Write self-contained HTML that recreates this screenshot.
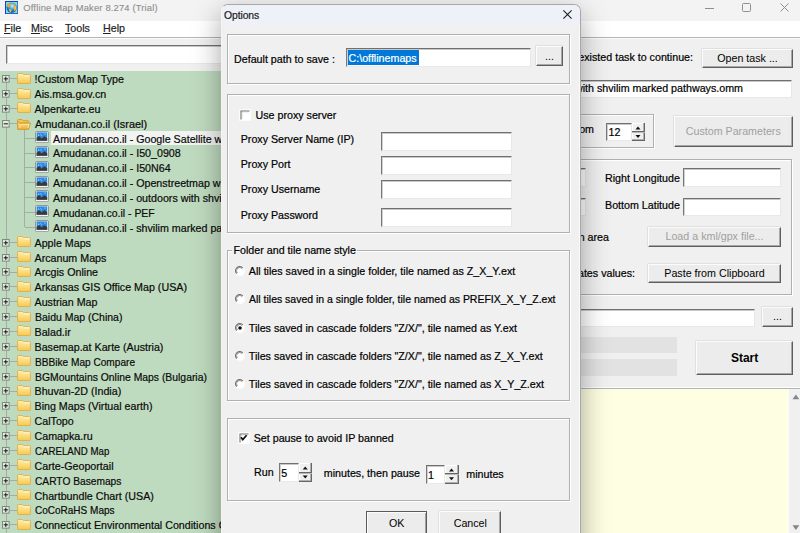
<!DOCTYPE html>
<html><head><meta charset="utf-8"><style>
*{box-sizing:border-box}
html,body{margin:0;padding:0}
body{width:800px;height:533px;overflow:hidden;position:relative;background:#f0f0f0;font-family:"Liberation Sans",sans-serif;font-size:10.7px;color:#000}
.t,.tt{position:absolute;white-space:nowrap;line-height:14px;-webkit-text-stroke:0.2px currentColor}
.tt{line-height:14.87px;color:#0a0a0a}
.tb{position:absolute;background:#fff;border-top:1px solid #707070;border-left:1px solid #787878;border-right:1px solid #e8e8e8;border-bottom:1px solid #e8e8e8;box-shadow:inset 0 1px 0 #c8c8c8, inset 1px 0 0 #d0d0d0}
.btn{position:absolute;background:#ececec;border-top:1px solid #fcfcfc;border-left:1px solid #fcfcfc;border-right:1px solid #5e5e5e;border-bottom:1px solid #5e5e5e;text-align:center;white-space:nowrap;box-shadow:inset -1px -1px 0 #a8a8a8, -0.5px -0.5px 0 #d0d0d0}
.grp{position:absolute;border:1px solid #b0b0b0;box-shadow:1px 1px 0 #fff, inset 1px 1px 0 #fff}
.u{text-decoration:underline}
</style></head><body>
<!-- MAIN WINDOW -->
<div style="position:absolute;left:0;top:0;width:800px;height:20.8px;background:#f3f3f3"></div>
<svg style="position:absolute;left:4.8px;top:0.9px" width="13.4" height="13.2" viewBox="0 0 13.4 13.2"><defs><radialGradient id="gl" cx="0.55" cy="0.35" r="0.65"><stop offset="0" stop-color="#c8f2ff"/><stop offset="0.5" stop-color="#3a9ad8"/><stop offset="1" stop-color="#0a4fa8"/></radialGradient></defs><rect x="0.5" y="0.5" width="12.4" height="12.2" fill="#6fe6c6" stroke="#1a3ae8" stroke-width="1"/><circle cx="6.7" cy="6.6" r="5.2" fill="url(#gl)"/><path d="M2 5.5 Q2.5 2.5 5.3 2.3 L5.8 3.8 L4.2 5.8 L3.2 6.8 Z" fill="#f5a030"/><path d="M5.8 1.6 Q6.8 1.3 7.6 1.8 L6.8 2.7 Z" fill="#f8b840"/><path d="M8.6 3 Q11.4 4 11.6 7 Q11.2 9.8 9.4 10.6 L9 8 L8.2 6.8 L8.8 5.2 Z" fill="#f3b030"/><path d="M9 6.5 L10.8 6.4 L10.6 8 Z" fill="#ffe040"/><path d="M3.8 8 L6.2 8.4 L6.6 9.8 L5.2 11.5 L4.5 10.2 Z" fill="#f8c030"/></svg>
<div class="t" style="left:23.3px;top:0.6px;font-size:9.4px;color:#8e8e8e;letter-spacing:0.17px;-webkit-text-stroke:0.15px #999">Offline Map Maker 8.274 (Trial)</div>
<div style="position:absolute;left:705px;top:7.5px;width:8.5px;height:1px;background:#8f8f8f"></div>
<div style="position:absolute;left:742px;top:3px;width:8.5px;height:8.5px;border:1px solid #8f8f8f;border-radius:1.5px"></div>
<svg style="position:absolute;left:780px;top:3px" width="9" height="9" viewBox="0 0 9 9"><path d="M0.5 0.5 L8.5 8.5 M8.5 0.5 L0.5 8.5" stroke="#8f8f8f" stroke-width="1"/></svg>
<div style="position:absolute;left:0;top:20.8px;width:800px;height:16.2px;background:#fff"></div>
<div class="t" style="left:4px;top:20.7px;color:#222"><span class="u">F</span>ile</div>
<div class="t" style="left:31px;top:20.7px;color:#222"><span class="u">M</span>isc</div>
<div class="t" style="left:65px;top:20.7px;color:#222"><span class="u">T</span>ools</div>
<div class="t" style="left:103px;top:20.7px;color:#222"><span class="u">H</span>elp</div>
<div style="position:absolute;left:0;top:36.9px;width:800px;height:1.2px;background:#b4b4b4"></div>
<div style="position:absolute;left:0;top:38px;width:800px;height:1px;background:#fdfdfd"></div>
<div class="tb" style="left:6px;top:45px;width:234px;height:19px;"></div>
<div style="position:absolute;left:0;top:70.9px;width:222px;height:463px;background:#bfdbbf"></div>
<div style="position:absolute;left:6px;top:78.7px;width:1px;height:454.3px;background:#a3ada3"></div>
<div style="position:absolute;left:24px;top:128.3px;width:1px;height:99.1px;background:#a3ada3"></div>
<div style="position:absolute;left:10px;top:78.2px;width:7px;height:1px;background:#a3ada3"></div>
<svg style="position:absolute;left:2.25px;top:75.05px" width="9.3" height="9.3" viewBox="0 0 9.3 9.3"><rect x="0.5" y="0.5" width="6.65" height="6.65" fill="#e2ebe2" stroke="#7f897f" stroke-width="1"/><path d="M1.7 3.825 H5.95" stroke="#111" stroke-width="1"/><path d="M3.825 1.7 V5.95" stroke="#111" stroke-width="1"/></svg>
<div style="position:absolute;left:17px;top:72.6px;width:14px;height:11px"><svg width="14" height="11" viewBox="0 0 14 11"><defs><linearGradient id="fg" x1="0" y1="0" x2="0" y2="1"><stop offset="0" stop-color="#fff0b0"/><stop offset="1" stop-color="#f7c94e"/></linearGradient></defs><path d="M0.6 1.2 Q0.6 0.5 1.3 0.5 H5.6 L6.8 1.7 H12.7 Q13.4 1.7 13.4 2.4 V10 Q13.4 10.5 12.7 10.5 H1.3 Q0.6 10.5 0.6 10 Z" fill="url(#fg)" stroke="#e2ad45" stroke-width="0.9"/><path d="M6.6 2.9 H12.8" stroke="#fffbe8" stroke-width="0.9"/></svg></div>
<div class="tt" style="left:34.5px;top:72.1px;">!Custom Map Type</div>
<div style="position:absolute;left:10px;top:93.1px;width:7px;height:1px;background:#a3ada3"></div>
<svg style="position:absolute;left:2.25px;top:89.92px" width="9.3" height="9.3" viewBox="0 0 9.3 9.3"><rect x="0.5" y="0.5" width="6.65" height="6.65" fill="#e2ebe2" stroke="#7f897f" stroke-width="1"/><path d="M1.7 3.825 H5.95" stroke="#111" stroke-width="1"/><path d="M3.825 1.7 V5.95" stroke="#111" stroke-width="1"/></svg>
<div style="position:absolute;left:17px;top:87.5px;width:14px;height:11px"><svg width="14" height="11" viewBox="0 0 14 11"><defs><linearGradient id="fg" x1="0" y1="0" x2="0" y2="1"><stop offset="0" stop-color="#fff0b0"/><stop offset="1" stop-color="#f7c94e"/></linearGradient></defs><path d="M0.6 1.2 Q0.6 0.5 1.3 0.5 H5.6 L6.8 1.7 H12.7 Q13.4 1.7 13.4 2.4 V10 Q13.4 10.5 12.7 10.5 H1.3 Q0.6 10.5 0.6 10 Z" fill="url(#fg)" stroke="#e2ad45" stroke-width="0.9"/><path d="M6.6 2.9 H12.8" stroke="#fffbe8" stroke-width="0.9"/></svg></div>
<div class="tt" style="left:34.5px;top:86.9px;">Ais.msa.gov.cn</div>
<div style="position:absolute;left:10px;top:107.9px;width:7px;height:1px;background:#a3ada3"></div>
<svg style="position:absolute;left:2.25px;top:104.80px" width="9.3" height="9.3" viewBox="0 0 9.3 9.3"><rect x="0.5" y="0.5" width="6.65" height="6.65" fill="#e2ebe2" stroke="#7f897f" stroke-width="1"/><path d="M1.7 3.825 H5.95" stroke="#111" stroke-width="1"/><path d="M3.825 1.7 V5.95" stroke="#111" stroke-width="1"/></svg>
<div style="position:absolute;left:17px;top:102.3px;width:14px;height:11px"><svg width="14" height="11" viewBox="0 0 14 11"><defs><linearGradient id="fg" x1="0" y1="0" x2="0" y2="1"><stop offset="0" stop-color="#fff0b0"/><stop offset="1" stop-color="#f7c94e"/></linearGradient></defs><path d="M0.6 1.2 Q0.6 0.5 1.3 0.5 H5.6 L6.8 1.7 H12.7 Q13.4 1.7 13.4 2.4 V10 Q13.4 10.5 12.7 10.5 H1.3 Q0.6 10.5 0.6 10 Z" fill="url(#fg)" stroke="#e2ad45" stroke-width="0.9"/><path d="M6.6 2.9 H12.8" stroke="#fffbe8" stroke-width="0.9"/></svg></div>
<div class="tt" style="left:34.5px;top:101.8px;">Alpenkarte.eu</div>
<div style="position:absolute;left:10px;top:122.8px;width:7px;height:1px;background:#a3ada3"></div>
<svg style="position:absolute;left:2.25px;top:119.67px" width="9.3" height="9.3" viewBox="0 0 9.3 9.3"><rect x="0.5" y="0.5" width="6.65" height="6.65" fill="#e2ebe2" stroke="#7f897f" stroke-width="1"/><path d="M1.7 3.825 H5.95" stroke="#111" stroke-width="1"/></svg>
<div style="position:absolute;left:17px;top:118.5px;width:14px;height:11px"><svg width="14" height="11" viewBox="0 0 14 11"><defs><linearGradient id="og" x1="0" y1="0" x2="0" y2="1"><stop offset="0" stop-color="#fde48c"/><stop offset="1" stop-color="#eeb237"/></linearGradient></defs><path d="M0.6 1.2 Q0.6 0.5 1.3 0.5 H5 L6.2 1.7 H11 Q11.7 1.7 11.7 2.4 V4 H0.6 Z" fill="#f5c550" stroke="#d89a2c" stroke-width="0.9"/><path d="M0.6 10.4 V2 L2.6 4.2 H13.5 L11.5 10.4 Z" fill="url(#og)" stroke="#d4962a" stroke-width="0.9"/><path d="M2.6 9 L3.8 5.4 H12 L11 9" stroke="#fff3c4" stroke-width="0.7" fill="none"/></svg></div>
<div class="tt" style="left:34.5px;top:116.7px;transform:scaleX(1.0203);transform-origin:0 0;">Amudanan.co.il (Israel)</div>
<div style="position:absolute;left:25px;top:137.7px;width:10px;height:1px;background:#a3ada3"></div>
<div style="position:absolute;left:35px;top:130.9px;width:14px;height:12px"><svg width="14" height="12" viewBox="0 0 14 12"><rect x="0.5" y="0.5" width="13" height="11.2" rx="1.2" fill="#f4f4f4" stroke="#8c8c8c" stroke-width="0.9"/><rect x="1.6" y="1.4" width="10.6" height="8.4" fill="#2b8ae6"/><path d="M3 4.2 h1.2 M5.6 3.6 l1 0.8 M9.5 3 h1" stroke="#e8f6ff" stroke-width="0.9"/><path d="M1.6 9.8 V7 L4 5 L6.6 7.6 L9.3 5.2 L12.2 7.2 V9.8 Z" fill="#3c3833"/></svg></div>
<div style="position:absolute;left:51px;top:131.3px;width:175px;height:13.9px;background:#f2f4f2"></div>
<div class="tt" style="left:53px;top:131.6px;">Amudanan.co.il - Google Satellite with shvilim</div>
<div style="position:absolute;left:25px;top:152.6px;width:10px;height:1px;background:#a3ada3"></div>
<div style="position:absolute;left:35px;top:145.8px;width:14px;height:12px"><svg width="14" height="12" viewBox="0 0 14 12"><rect x="0.5" y="0.5" width="13" height="11.2" rx="1.2" fill="#f4f4f4" stroke="#8c8c8c" stroke-width="0.9"/><rect x="1.6" y="1.4" width="10.6" height="8.4" fill="#2b8ae6"/><path d="M3 4.2 h1.2 M5.6 3.6 l1 0.8 M9.5 3 h1" stroke="#e8f6ff" stroke-width="0.9"/><path d="M1.6 9.8 V7 L4 5 L6.6 7.6 L9.3 5.2 L12.2 7.2 V9.8 Z" fill="#3c3833"/></svg></div>
<div class="tt" style="left:53px;top:146.4px;">Amudanan.co.il - I50_0908</div>
<div style="position:absolute;left:25px;top:167.4px;width:10px;height:1px;background:#a3ada3"></div>
<div style="position:absolute;left:35px;top:160.6px;width:14px;height:12px"><svg width="14" height="12" viewBox="0 0 14 12"><rect x="0.5" y="0.5" width="13" height="11.2" rx="1.2" fill="#f4f4f4" stroke="#8c8c8c" stroke-width="0.9"/><rect x="1.6" y="1.4" width="10.6" height="8.4" fill="#2b8ae6"/><path d="M3 4.2 h1.2 M5.6 3.6 l1 0.8 M9.5 3 h1" stroke="#e8f6ff" stroke-width="0.9"/><path d="M1.6 9.8 V7 L4 5 L6.6 7.6 L9.3 5.2 L12.2 7.2 V9.8 Z" fill="#3c3833"/></svg></div>
<div class="tt" style="left:53px;top:161.3px;">Amudanan.co.il - I50N64</div>
<div style="position:absolute;left:25px;top:182.3px;width:10px;height:1px;background:#a3ada3"></div>
<div style="position:absolute;left:35px;top:175.5px;width:14px;height:12px"><svg width="14" height="12" viewBox="0 0 14 12"><rect x="0.5" y="0.5" width="13" height="11.2" rx="1.2" fill="#f4f4f4" stroke="#8c8c8c" stroke-width="0.9"/><rect x="1.6" y="1.4" width="10.6" height="8.4" fill="#2b8ae6"/><path d="M3 4.2 h1.2 M5.6 3.6 l1 0.8 M9.5 3 h1" stroke="#e8f6ff" stroke-width="0.9"/><path d="M1.6 9.8 V7 L4 5 L6.6 7.6 L9.3 5.2 L12.2 7.2 V9.8 Z" fill="#3c3833"/></svg></div>
<div class="tt" style="left:53px;top:176.2px;">Amudanan.co.il - Openstreetmap with shvilim</div>
<div style="position:absolute;left:25px;top:197.2px;width:10px;height:1px;background:#a3ada3"></div>
<div style="position:absolute;left:35px;top:190.4px;width:14px;height:12px"><svg width="14" height="12" viewBox="0 0 14 12"><rect x="0.5" y="0.5" width="13" height="11.2" rx="1.2" fill="#f4f4f4" stroke="#8c8c8c" stroke-width="0.9"/><rect x="1.6" y="1.4" width="10.6" height="8.4" fill="#2b8ae6"/><path d="M3 4.2 h1.2 M5.6 3.6 l1 0.8 M9.5 3 h1" stroke="#e8f6ff" stroke-width="0.9"/><path d="M1.6 9.8 V7 L4 5 L6.6 7.6 L9.3 5.2 L12.2 7.2 V9.8 Z" fill="#3c3833"/></svg></div>
<div class="tt" style="left:53px;top:191.0px;">Amudanan.co.il - outdoors with shvilim</div>
<div style="position:absolute;left:25px;top:212.1px;width:10px;height:1px;background:#a3ada3"></div>
<div style="position:absolute;left:35px;top:205.3px;width:14px;height:12px"><svg width="14" height="12" viewBox="0 0 14 12"><rect x="0.5" y="0.5" width="13" height="11.2" rx="1.2" fill="#f4f4f4" stroke="#8c8c8c" stroke-width="0.9"/><rect x="1.6" y="1.4" width="10.6" height="8.4" fill="#2b8ae6"/><path d="M3 4.2 h1.2 M5.6 3.6 l1 0.8 M9.5 3 h1" stroke="#e8f6ff" stroke-width="0.9"/><path d="M1.6 9.8 V7 L4 5 L6.6 7.6 L9.3 5.2 L12.2 7.2 V9.8 Z" fill="#3c3833"/></svg></div>
<div class="tt" style="left:53px;top:205.9px;transform:scaleX(0.9786);transform-origin:0 0;">Amudanan.co.il - PEF</div>
<div style="position:absolute;left:25px;top:226.9px;width:10px;height:1px;background:#a3ada3"></div>
<div style="position:absolute;left:35px;top:220.1px;width:14px;height:12px"><svg width="14" height="12" viewBox="0 0 14 12"><rect x="0.5" y="0.5" width="13" height="11.2" rx="1.2" fill="#f4f4f4" stroke="#8c8c8c" stroke-width="0.9"/><rect x="1.6" y="1.4" width="10.6" height="8.4" fill="#2b8ae6"/><path d="M3 4.2 h1.2 M5.6 3.6 l1 0.8 M9.5 3 h1" stroke="#e8f6ff" stroke-width="0.9"/><path d="M1.6 9.8 V7 L4 5 L6.6 7.6 L9.3 5.2 L12.2 7.2 V9.8 Z" fill="#3c3833"/></svg></div>
<div class="tt" style="left:53px;top:220.8px;">Amudanan.co.il - shvilim marked pathways</div>
<div style="position:absolute;left:10px;top:241.8px;width:7px;height:1px;background:#a3ada3"></div>
<svg style="position:absolute;left:2.25px;top:238.65px" width="9.3" height="9.3" viewBox="0 0 9.3 9.3"><rect x="0.5" y="0.5" width="6.65" height="6.65" fill="#e2ebe2" stroke="#7f897f" stroke-width="1"/><path d="M1.7 3.825 H5.95" stroke="#111" stroke-width="1"/><path d="M3.825 1.7 V5.95" stroke="#111" stroke-width="1"/></svg>
<div style="position:absolute;left:17px;top:236.2px;width:14px;height:11px"><svg width="14" height="11" viewBox="0 0 14 11"><defs><linearGradient id="fg" x1="0" y1="0" x2="0" y2="1"><stop offset="0" stop-color="#fff0b0"/><stop offset="1" stop-color="#f7c94e"/></linearGradient></defs><path d="M0.6 1.2 Q0.6 0.5 1.3 0.5 H5.6 L6.8 1.7 H12.7 Q13.4 1.7 13.4 2.4 V10 Q13.4 10.5 12.7 10.5 H1.3 Q0.6 10.5 0.6 10 Z" fill="url(#fg)" stroke="#e2ad45" stroke-width="0.9"/><path d="M6.6 2.9 H12.8" stroke="#fffbe8" stroke-width="0.9"/></svg></div>
<div class="tt" style="left:34.5px;top:235.7px;">Apple Maps</div>
<div style="position:absolute;left:10px;top:256.7px;width:7px;height:1px;background:#a3ada3"></div>
<svg style="position:absolute;left:2.25px;top:253.53px" width="9.3" height="9.3" viewBox="0 0 9.3 9.3"><rect x="0.5" y="0.5" width="6.65" height="6.65" fill="#e2ebe2" stroke="#7f897f" stroke-width="1"/><path d="M1.7 3.825 H5.95" stroke="#111" stroke-width="1"/><path d="M3.825 1.7 V5.95" stroke="#111" stroke-width="1"/></svg>
<div style="position:absolute;left:17px;top:251.1px;width:14px;height:11px"><svg width="14" height="11" viewBox="0 0 14 11"><defs><linearGradient id="fg" x1="0" y1="0" x2="0" y2="1"><stop offset="0" stop-color="#fff0b0"/><stop offset="1" stop-color="#f7c94e"/></linearGradient></defs><path d="M0.6 1.2 Q0.6 0.5 1.3 0.5 H5.6 L6.8 1.7 H12.7 Q13.4 1.7 13.4 2.4 V10 Q13.4 10.5 12.7 10.5 H1.3 Q0.6 10.5 0.6 10 Z" fill="url(#fg)" stroke="#e2ad45" stroke-width="0.9"/><path d="M6.6 2.9 H12.8" stroke="#fffbe8" stroke-width="0.9"/></svg></div>
<div class="tt" style="left:34.5px;top:250.5px;">Arcanum Maps</div>
<div style="position:absolute;left:10px;top:271.5px;width:7px;height:1px;background:#a3ada3"></div>
<svg style="position:absolute;left:2.25px;top:268.40px" width="9.3" height="9.3" viewBox="0 0 9.3 9.3"><rect x="0.5" y="0.5" width="6.65" height="6.65" fill="#e2ebe2" stroke="#7f897f" stroke-width="1"/><path d="M1.7 3.825 H5.95" stroke="#111" stroke-width="1"/><path d="M3.825 1.7 V5.95" stroke="#111" stroke-width="1"/></svg>
<div style="position:absolute;left:17px;top:265.9px;width:14px;height:11px"><svg width="14" height="11" viewBox="0 0 14 11"><defs><linearGradient id="fg" x1="0" y1="0" x2="0" y2="1"><stop offset="0" stop-color="#fff0b0"/><stop offset="1" stop-color="#f7c94e"/></linearGradient></defs><path d="M0.6 1.2 Q0.6 0.5 1.3 0.5 H5.6 L6.8 1.7 H12.7 Q13.4 1.7 13.4 2.4 V10 Q13.4 10.5 12.7 10.5 H1.3 Q0.6 10.5 0.6 10 Z" fill="url(#fg)" stroke="#e2ad45" stroke-width="0.9"/><path d="M6.6 2.9 H12.8" stroke="#fffbe8" stroke-width="0.9"/></svg></div>
<div class="tt" style="left:34.5px;top:265.4px;">Arcgis Online</div>
<div style="position:absolute;left:10px;top:286.4px;width:7px;height:1px;background:#a3ada3"></div>
<svg style="position:absolute;left:2.25px;top:283.27px" width="9.3" height="9.3" viewBox="0 0 9.3 9.3"><rect x="0.5" y="0.5" width="6.65" height="6.65" fill="#e2ebe2" stroke="#7f897f" stroke-width="1"/><path d="M1.7 3.825 H5.95" stroke="#111" stroke-width="1"/><path d="M3.825 1.7 V5.95" stroke="#111" stroke-width="1"/></svg>
<div style="position:absolute;left:17px;top:280.8px;width:14px;height:11px"><svg width="14" height="11" viewBox="0 0 14 11"><defs><linearGradient id="fg" x1="0" y1="0" x2="0" y2="1"><stop offset="0" stop-color="#fff0b0"/><stop offset="1" stop-color="#f7c94e"/></linearGradient></defs><path d="M0.6 1.2 Q0.6 0.5 1.3 0.5 H5.6 L6.8 1.7 H12.7 Q13.4 1.7 13.4 2.4 V10 Q13.4 10.5 12.7 10.5 H1.3 Q0.6 10.5 0.6 10 Z" fill="url(#fg)" stroke="#e2ad45" stroke-width="0.9"/><path d="M6.6 2.9 H12.8" stroke="#fffbe8" stroke-width="0.9"/></svg></div>
<div class="tt" style="left:34.5px;top:280.3px;">Arkansas GIS Office Map (USA)</div>
<div style="position:absolute;left:10px;top:301.3px;width:7px;height:1px;background:#a3ada3"></div>
<svg style="position:absolute;left:2.25px;top:298.15px" width="9.3" height="9.3" viewBox="0 0 9.3 9.3"><rect x="0.5" y="0.5" width="6.65" height="6.65" fill="#e2ebe2" stroke="#7f897f" stroke-width="1"/><path d="M1.7 3.825 H5.95" stroke="#111" stroke-width="1"/><path d="M3.825 1.7 V5.95" stroke="#111" stroke-width="1"/></svg>
<div style="position:absolute;left:17px;top:295.7px;width:14px;height:11px"><svg width="14" height="11" viewBox="0 0 14 11"><defs><linearGradient id="fg" x1="0" y1="0" x2="0" y2="1"><stop offset="0" stop-color="#fff0b0"/><stop offset="1" stop-color="#f7c94e"/></linearGradient></defs><path d="M0.6 1.2 Q0.6 0.5 1.3 0.5 H5.6 L6.8 1.7 H12.7 Q13.4 1.7 13.4 2.4 V10 Q13.4 10.5 12.7 10.5 H1.3 Q0.6 10.5 0.6 10 Z" fill="url(#fg)" stroke="#e2ad45" stroke-width="0.9"/><path d="M6.6 2.9 H12.8" stroke="#fffbe8" stroke-width="0.9"/></svg></div>
<div class="tt" style="left:34.5px;top:295.2px;">Austrian Map</div>
<div style="position:absolute;left:10px;top:316.2px;width:7px;height:1px;background:#a3ada3"></div>
<svg style="position:absolute;left:2.25px;top:313.02px" width="9.3" height="9.3" viewBox="0 0 9.3 9.3"><rect x="0.5" y="0.5" width="6.65" height="6.65" fill="#e2ebe2" stroke="#7f897f" stroke-width="1"/><path d="M1.7 3.825 H5.95" stroke="#111" stroke-width="1"/><path d="M3.825 1.7 V5.95" stroke="#111" stroke-width="1"/></svg>
<div style="position:absolute;left:17px;top:310.6px;width:14px;height:11px"><svg width="14" height="11" viewBox="0 0 14 11"><defs><linearGradient id="fg" x1="0" y1="0" x2="0" y2="1"><stop offset="0" stop-color="#fff0b0"/><stop offset="1" stop-color="#f7c94e"/></linearGradient></defs><path d="M0.6 1.2 Q0.6 0.5 1.3 0.5 H5.6 L6.8 1.7 H12.7 Q13.4 1.7 13.4 2.4 V10 Q13.4 10.5 12.7 10.5 H1.3 Q0.6 10.5 0.6 10 Z" fill="url(#fg)" stroke="#e2ad45" stroke-width="0.9"/><path d="M6.6 2.9 H12.8" stroke="#fffbe8" stroke-width="0.9"/></svg></div>
<div class="tt" style="left:34.5px;top:310.0px;transform:scaleX(0.9808);transform-origin:0 0;">Baidu Map (China)</div>
<div style="position:absolute;left:10px;top:331.0px;width:7px;height:1px;background:#a3ada3"></div>
<svg style="position:absolute;left:2.25px;top:327.89px" width="9.3" height="9.3" viewBox="0 0 9.3 9.3"><rect x="0.5" y="0.5" width="6.65" height="6.65" fill="#e2ebe2" stroke="#7f897f" stroke-width="1"/><path d="M1.7 3.825 H5.95" stroke="#111" stroke-width="1"/><path d="M3.825 1.7 V5.95" stroke="#111" stroke-width="1"/></svg>
<div style="position:absolute;left:17px;top:325.4px;width:14px;height:11px"><svg width="14" height="11" viewBox="0 0 14 11"><defs><linearGradient id="fg" x1="0" y1="0" x2="0" y2="1"><stop offset="0" stop-color="#fff0b0"/><stop offset="1" stop-color="#f7c94e"/></linearGradient></defs><path d="M0.6 1.2 Q0.6 0.5 1.3 0.5 H5.6 L6.8 1.7 H12.7 Q13.4 1.7 13.4 2.4 V10 Q13.4 10.5 12.7 10.5 H1.3 Q0.6 10.5 0.6 10 Z" fill="url(#fg)" stroke="#e2ad45" stroke-width="0.9"/><path d="M6.6 2.9 H12.8" stroke="#fffbe8" stroke-width="0.9"/></svg></div>
<div class="tt" style="left:34.5px;top:324.9px;">Balad.ir</div>
<div style="position:absolute;left:10px;top:345.9px;width:7px;height:1px;background:#a3ada3"></div>
<svg style="position:absolute;left:2.25px;top:342.76px" width="9.3" height="9.3" viewBox="0 0 9.3 9.3"><rect x="0.5" y="0.5" width="6.65" height="6.65" fill="#e2ebe2" stroke="#7f897f" stroke-width="1"/><path d="M1.7 3.825 H5.95" stroke="#111" stroke-width="1"/><path d="M3.825 1.7 V5.95" stroke="#111" stroke-width="1"/></svg>
<div style="position:absolute;left:17px;top:340.3px;width:14px;height:11px"><svg width="14" height="11" viewBox="0 0 14 11"><defs><linearGradient id="fg" x1="0" y1="0" x2="0" y2="1"><stop offset="0" stop-color="#fff0b0"/><stop offset="1" stop-color="#f7c94e"/></linearGradient></defs><path d="M0.6 1.2 Q0.6 0.5 1.3 0.5 H5.6 L6.8 1.7 H12.7 Q13.4 1.7 13.4 2.4 V10 Q13.4 10.5 12.7 10.5 H1.3 Q0.6 10.5 0.6 10 Z" fill="url(#fg)" stroke="#e2ad45" stroke-width="0.9"/><path d="M6.6 2.9 H12.8" stroke="#fffbe8" stroke-width="0.9"/></svg></div>
<div class="tt" style="left:34.5px;top:339.8px;">Basemap.at Karte (Austria)</div>
<div style="position:absolute;left:10px;top:360.8px;width:7px;height:1px;background:#a3ada3"></div>
<svg style="position:absolute;left:2.25px;top:357.64px" width="9.3" height="9.3" viewBox="0 0 9.3 9.3"><rect x="0.5" y="0.5" width="6.65" height="6.65" fill="#e2ebe2" stroke="#7f897f" stroke-width="1"/><path d="M1.7 3.825 H5.95" stroke="#111" stroke-width="1"/><path d="M3.825 1.7 V5.95" stroke="#111" stroke-width="1"/></svg>
<div style="position:absolute;left:17px;top:355.2px;width:14px;height:11px"><svg width="14" height="11" viewBox="0 0 14 11"><defs><linearGradient id="fg" x1="0" y1="0" x2="0" y2="1"><stop offset="0" stop-color="#fff0b0"/><stop offset="1" stop-color="#f7c94e"/></linearGradient></defs><path d="M0.6 1.2 Q0.6 0.5 1.3 0.5 H5.6 L6.8 1.7 H12.7 Q13.4 1.7 13.4 2.4 V10 Q13.4 10.5 12.7 10.5 H1.3 Q0.6 10.5 0.6 10 Z" fill="url(#fg)" stroke="#e2ad45" stroke-width="0.9"/><path d="M6.6 2.9 H12.8" stroke="#fffbe8" stroke-width="0.9"/></svg></div>
<div class="tt" style="left:34.5px;top:354.7px;transform:scaleX(0.9460);transform-origin:0 0;">BBBike Map Compare</div>
<div style="position:absolute;left:10px;top:375.7px;width:7px;height:1px;background:#a3ada3"></div>
<svg style="position:absolute;left:2.25px;top:372.51px" width="9.3" height="9.3" viewBox="0 0 9.3 9.3"><rect x="0.5" y="0.5" width="6.65" height="6.65" fill="#e2ebe2" stroke="#7f897f" stroke-width="1"/><path d="M1.7 3.825 H5.95" stroke="#111" stroke-width="1"/><path d="M3.825 1.7 V5.95" stroke="#111" stroke-width="1"/></svg>
<div style="position:absolute;left:17px;top:370.1px;width:14px;height:11px"><svg width="14" height="11" viewBox="0 0 14 11"><defs><linearGradient id="fg" x1="0" y1="0" x2="0" y2="1"><stop offset="0" stop-color="#fff0b0"/><stop offset="1" stop-color="#f7c94e"/></linearGradient></defs><path d="M0.6 1.2 Q0.6 0.5 1.3 0.5 H5.6 L6.8 1.7 H12.7 Q13.4 1.7 13.4 2.4 V10 Q13.4 10.5 12.7 10.5 H1.3 Q0.6 10.5 0.6 10 Z" fill="url(#fg)" stroke="#e2ad45" stroke-width="0.9"/><path d="M6.6 2.9 H12.8" stroke="#fffbe8" stroke-width="0.9"/></svg></div>
<div class="tt" style="left:34.5px;top:369.5px;transform:scaleX(0.9711);transform-origin:0 0;">BGMountains Online Maps (Bulgaria)</div>
<div style="position:absolute;left:10px;top:390.5px;width:7px;height:1px;background:#a3ada3"></div>
<svg style="position:absolute;left:2.25px;top:387.38px" width="9.3" height="9.3" viewBox="0 0 9.3 9.3"><rect x="0.5" y="0.5" width="6.65" height="6.65" fill="#e2ebe2" stroke="#7f897f" stroke-width="1"/><path d="M1.7 3.825 H5.95" stroke="#111" stroke-width="1"/><path d="M3.825 1.7 V5.95" stroke="#111" stroke-width="1"/></svg>
<div style="position:absolute;left:17px;top:384.9px;width:14px;height:11px"><svg width="14" height="11" viewBox="0 0 14 11"><defs><linearGradient id="fg" x1="0" y1="0" x2="0" y2="1"><stop offset="0" stop-color="#fff0b0"/><stop offset="1" stop-color="#f7c94e"/></linearGradient></defs><path d="M0.6 1.2 Q0.6 0.5 1.3 0.5 H5.6 L6.8 1.7 H12.7 Q13.4 1.7 13.4 2.4 V10 Q13.4 10.5 12.7 10.5 H1.3 Q0.6 10.5 0.6 10 Z" fill="url(#fg)" stroke="#e2ad45" stroke-width="0.9"/><path d="M6.6 2.9 H12.8" stroke="#fffbe8" stroke-width="0.9"/></svg></div>
<div class="tt" style="left:34.5px;top:384.4px;">Bhuvan-2D (India)</div>
<div style="position:absolute;left:10px;top:405.4px;width:7px;height:1px;background:#a3ada3"></div>
<svg style="position:absolute;left:2.25px;top:402.26px" width="9.3" height="9.3" viewBox="0 0 9.3 9.3"><rect x="0.5" y="0.5" width="6.65" height="6.65" fill="#e2ebe2" stroke="#7f897f" stroke-width="1"/><path d="M1.7 3.825 H5.95" stroke="#111" stroke-width="1"/><path d="M3.825 1.7 V5.95" stroke="#111" stroke-width="1"/></svg>
<div style="position:absolute;left:17px;top:399.8px;width:14px;height:11px"><svg width="14" height="11" viewBox="0 0 14 11"><defs><linearGradient id="fg" x1="0" y1="0" x2="0" y2="1"><stop offset="0" stop-color="#fff0b0"/><stop offset="1" stop-color="#f7c94e"/></linearGradient></defs><path d="M0.6 1.2 Q0.6 0.5 1.3 0.5 H5.6 L6.8 1.7 H12.7 Q13.4 1.7 13.4 2.4 V10 Q13.4 10.5 12.7 10.5 H1.3 Q0.6 10.5 0.6 10 Z" fill="url(#fg)" stroke="#e2ad45" stroke-width="0.9"/><path d="M6.6 2.9 H12.8" stroke="#fffbe8" stroke-width="0.9"/></svg></div>
<div class="tt" style="left:34.5px;top:399.3px;">Bing Maps (Virtual earth)</div>
<div style="position:absolute;left:10px;top:420.3px;width:7px;height:1px;background:#a3ada3"></div>
<svg style="position:absolute;left:2.25px;top:417.13px" width="9.3" height="9.3" viewBox="0 0 9.3 9.3"><rect x="0.5" y="0.5" width="6.65" height="6.65" fill="#e2ebe2" stroke="#7f897f" stroke-width="1"/><path d="M1.7 3.825 H5.95" stroke="#111" stroke-width="1"/><path d="M3.825 1.7 V5.95" stroke="#111" stroke-width="1"/></svg>
<div style="position:absolute;left:17px;top:414.7px;width:14px;height:11px"><svg width="14" height="11" viewBox="0 0 14 11"><defs><linearGradient id="fg" x1="0" y1="0" x2="0" y2="1"><stop offset="0" stop-color="#fff0b0"/><stop offset="1" stop-color="#f7c94e"/></linearGradient></defs><path d="M0.6 1.2 Q0.6 0.5 1.3 0.5 H5.6 L6.8 1.7 H12.7 Q13.4 1.7 13.4 2.4 V10 Q13.4 10.5 12.7 10.5 H1.3 Q0.6 10.5 0.6 10 Z" fill="url(#fg)" stroke="#e2ad45" stroke-width="0.9"/><path d="M6.6 2.9 H12.8" stroke="#fffbe8" stroke-width="0.9"/></svg></div>
<div class="tt" style="left:34.5px;top:414.1px;">CalTopo</div>
<div style="position:absolute;left:10px;top:435.2px;width:7px;height:1px;background:#a3ada3"></div>
<svg style="position:absolute;left:2.25px;top:432.00px" width="9.3" height="9.3" viewBox="0 0 9.3 9.3"><rect x="0.5" y="0.5" width="6.65" height="6.65" fill="#e2ebe2" stroke="#7f897f" stroke-width="1"/><path d="M1.7 3.825 H5.95" stroke="#111" stroke-width="1"/><path d="M3.825 1.7 V5.95" stroke="#111" stroke-width="1"/></svg>
<div style="position:absolute;left:17px;top:429.6px;width:14px;height:11px"><svg width="14" height="11" viewBox="0 0 14 11"><defs><linearGradient id="fg" x1="0" y1="0" x2="0" y2="1"><stop offset="0" stop-color="#fff0b0"/><stop offset="1" stop-color="#f7c94e"/></linearGradient></defs><path d="M0.6 1.2 Q0.6 0.5 1.3 0.5 H5.6 L6.8 1.7 H12.7 Q13.4 1.7 13.4 2.4 V10 Q13.4 10.5 12.7 10.5 H1.3 Q0.6 10.5 0.6 10 Z" fill="url(#fg)" stroke="#e2ad45" stroke-width="0.9"/><path d="M6.6 2.9 H12.8" stroke="#fffbe8" stroke-width="0.9"/></svg></div>
<div class="tt" style="left:34.5px;top:429.0px;">Camapka.ru</div>
<div style="position:absolute;left:10px;top:450.0px;width:7px;height:1px;background:#a3ada3"></div>
<svg style="position:absolute;left:2.25px;top:446.88px" width="9.3" height="9.3" viewBox="0 0 9.3 9.3"><rect x="0.5" y="0.5" width="6.65" height="6.65" fill="#e2ebe2" stroke="#7f897f" stroke-width="1"/><path d="M1.7 3.825 H5.95" stroke="#111" stroke-width="1"/><path d="M3.825 1.7 V5.95" stroke="#111" stroke-width="1"/></svg>
<div style="position:absolute;left:17px;top:444.4px;width:14px;height:11px"><svg width="14" height="11" viewBox="0 0 14 11"><defs><linearGradient id="fg" x1="0" y1="0" x2="0" y2="1"><stop offset="0" stop-color="#fff0b0"/><stop offset="1" stop-color="#f7c94e"/></linearGradient></defs><path d="M0.6 1.2 Q0.6 0.5 1.3 0.5 H5.6 L6.8 1.7 H12.7 Q13.4 1.7 13.4 2.4 V10 Q13.4 10.5 12.7 10.5 H1.3 Q0.6 10.5 0.6 10 Z" fill="url(#fg)" stroke="#e2ad45" stroke-width="0.9"/><path d="M6.6 2.9 H12.8" stroke="#fffbe8" stroke-width="0.9"/></svg></div>
<div class="tt" style="left:34.5px;top:443.9px;transform:scaleX(0.9067);transform-origin:0 0;">CARELAND Map</div>
<div style="position:absolute;left:10px;top:464.9px;width:7px;height:1px;background:#a3ada3"></div>
<svg style="position:absolute;left:2.25px;top:461.75px" width="9.3" height="9.3" viewBox="0 0 9.3 9.3"><rect x="0.5" y="0.5" width="6.65" height="6.65" fill="#e2ebe2" stroke="#7f897f" stroke-width="1"/><path d="M1.7 3.825 H5.95" stroke="#111" stroke-width="1"/><path d="M3.825 1.7 V5.95" stroke="#111" stroke-width="1"/></svg>
<div style="position:absolute;left:17px;top:459.3px;width:14px;height:11px"><svg width="14" height="11" viewBox="0 0 14 11"><defs><linearGradient id="fg" x1="0" y1="0" x2="0" y2="1"><stop offset="0" stop-color="#fff0b0"/><stop offset="1" stop-color="#f7c94e"/></linearGradient></defs><path d="M0.6 1.2 Q0.6 0.5 1.3 0.5 H5.6 L6.8 1.7 H12.7 Q13.4 1.7 13.4 2.4 V10 Q13.4 10.5 12.7 10.5 H1.3 Q0.6 10.5 0.6 10 Z" fill="url(#fg)" stroke="#e2ad45" stroke-width="0.9"/><path d="M6.6 2.9 H12.8" stroke="#fffbe8" stroke-width="0.9"/></svg></div>
<div class="tt" style="left:34.5px;top:458.8px;">Carte-Geoportail</div>
<div style="position:absolute;left:10px;top:479.8px;width:7px;height:1px;background:#a3ada3"></div>
<svg style="position:absolute;left:2.25px;top:476.62px" width="9.3" height="9.3" viewBox="0 0 9.3 9.3"><rect x="0.5" y="0.5" width="6.65" height="6.65" fill="#e2ebe2" stroke="#7f897f" stroke-width="1"/><path d="M1.7 3.825 H5.95" stroke="#111" stroke-width="1"/><path d="M3.825 1.7 V5.95" stroke="#111" stroke-width="1"/></svg>
<div style="position:absolute;left:17px;top:474.2px;width:14px;height:11px"><svg width="14" height="11" viewBox="0 0 14 11"><defs><linearGradient id="fg" x1="0" y1="0" x2="0" y2="1"><stop offset="0" stop-color="#fff0b0"/><stop offset="1" stop-color="#f7c94e"/></linearGradient></defs><path d="M0.6 1.2 Q0.6 0.5 1.3 0.5 H5.6 L6.8 1.7 H12.7 Q13.4 1.7 13.4 2.4 V10 Q13.4 10.5 12.7 10.5 H1.3 Q0.6 10.5 0.6 10 Z" fill="url(#fg)" stroke="#e2ad45" stroke-width="0.9"/><path d="M6.6 2.9 H12.8" stroke="#fffbe8" stroke-width="0.9"/></svg></div>
<div class="tt" style="left:34.5px;top:473.6px;transform:scaleX(0.9542);transform-origin:0 0;">CARTO Basemaps</div>
<div style="position:absolute;left:10px;top:494.6px;width:7px;height:1px;background:#a3ada3"></div>
<svg style="position:absolute;left:2.25px;top:491.49px" width="9.3" height="9.3" viewBox="0 0 9.3 9.3"><rect x="0.5" y="0.5" width="6.65" height="6.65" fill="#e2ebe2" stroke="#7f897f" stroke-width="1"/><path d="M1.7 3.825 H5.95" stroke="#111" stroke-width="1"/><path d="M3.825 1.7 V5.95" stroke="#111" stroke-width="1"/></svg>
<div style="position:absolute;left:17px;top:489.0px;width:14px;height:11px"><svg width="14" height="11" viewBox="0 0 14 11"><defs><linearGradient id="fg" x1="0" y1="0" x2="0" y2="1"><stop offset="0" stop-color="#fff0b0"/><stop offset="1" stop-color="#f7c94e"/></linearGradient></defs><path d="M0.6 1.2 Q0.6 0.5 1.3 0.5 H5.6 L6.8 1.7 H12.7 Q13.4 1.7 13.4 2.4 V10 Q13.4 10.5 12.7 10.5 H1.3 Q0.6 10.5 0.6 10 Z" fill="url(#fg)" stroke="#e2ad45" stroke-width="0.9"/><path d="M6.6 2.9 H12.8" stroke="#fffbe8" stroke-width="0.9"/></svg></div>
<div class="tt" style="left:34.5px;top:488.5px;">Chartbundle Chart (USA)</div>
<div style="position:absolute;left:10px;top:509.5px;width:7px;height:1px;background:#a3ada3"></div>
<svg style="position:absolute;left:2.25px;top:506.37px" width="9.3" height="9.3" viewBox="0 0 9.3 9.3"><rect x="0.5" y="0.5" width="6.65" height="6.65" fill="#e2ebe2" stroke="#7f897f" stroke-width="1"/><path d="M1.7 3.825 H5.95" stroke="#111" stroke-width="1"/><path d="M3.825 1.7 V5.95" stroke="#111" stroke-width="1"/></svg>
<div style="position:absolute;left:17px;top:503.9px;width:14px;height:11px"><svg width="14" height="11" viewBox="0 0 14 11"><defs><linearGradient id="fg" x1="0" y1="0" x2="0" y2="1"><stop offset="0" stop-color="#fff0b0"/><stop offset="1" stop-color="#f7c94e"/></linearGradient></defs><path d="M0.6 1.2 Q0.6 0.5 1.3 0.5 H5.6 L6.8 1.7 H12.7 Q13.4 1.7 13.4 2.4 V10 Q13.4 10.5 12.7 10.5 H1.3 Q0.6 10.5 0.6 10 Z" fill="url(#fg)" stroke="#e2ad45" stroke-width="0.9"/><path d="M6.6 2.9 H12.8" stroke="#fffbe8" stroke-width="0.9"/></svg></div>
<div class="tt" style="left:34.5px;top:503.4px;transform:scaleX(0.9361);transform-origin:0 0;">CoCoRaHS Maps</div>
<div style="position:absolute;left:10px;top:524.4px;width:7px;height:1px;background:#a3ada3"></div>
<svg style="position:absolute;left:2.25px;top:521.24px" width="9.3" height="9.3" viewBox="0 0 9.3 9.3"><rect x="0.5" y="0.5" width="6.65" height="6.65" fill="#e2ebe2" stroke="#7f897f" stroke-width="1"/><path d="M1.7 3.825 H5.95" stroke="#111" stroke-width="1"/><path d="M3.825 1.7 V5.95" stroke="#111" stroke-width="1"/></svg>
<div style="position:absolute;left:17px;top:518.8px;width:14px;height:11px"><svg width="14" height="11" viewBox="0 0 14 11"><defs><linearGradient id="fg" x1="0" y1="0" x2="0" y2="1"><stop offset="0" stop-color="#fff0b0"/><stop offset="1" stop-color="#f7c94e"/></linearGradient></defs><path d="M0.6 1.2 Q0.6 0.5 1.3 0.5 H5.6 L6.8 1.7 H12.7 Q13.4 1.7 13.4 2.4 V10 Q13.4 10.5 12.7 10.5 H1.3 Q0.6 10.5 0.6 10 Z" fill="url(#fg)" stroke="#e2ad45" stroke-width="0.9"/><path d="M6.6 2.9 H12.8" stroke="#fffbe8" stroke-width="0.9"/></svg></div>
<div class="tt" style="left:34.5px;top:518.3px;">Connecticut Environmental Conditions Online</div>

<!-- right side main -->
<div class="t" style="right:107px;top:49.8px;">Choose an existed task to continue:</div>
<div class="btn" style="left:702px;top:49px;width:91px;height:19px;line-height:17px;">Open task ...</div>
<div class="tb" style="left:560px;top:79.5px;width:232px;height:18.0px;"></div>
<div class="t" style="right:57px;top:80.8px;">Amudanan.co.il - outdoors with shvilim marked pathways.omm</div>
<div class="grp" style="left:540px;top:114px;width:114px;height:33.5px;"></div>
<div class="t" style="right:206px;top:122px;">Max Zoom</div>
<div class="tb" style="left:606px;top:122.5px;width:26px;height:18.5px;"></div><div class="t" style="left:608.5px;top:125.05px">12</div><div style="position:absolute;left:632px;top:122.5px;width:13px;height:18.5px;background:#f0f0f0;border-right:1px solid #666;border-bottom:1px solid #666;box-shadow:inset -1px -1px 0 #b0b0b0, inset 1px 1px 0 #fff"><div style="position:absolute;left:0;top:8.25px;width:13px;height:1px;background:#666"></div><div style="position:absolute;left:0;top:9.25px;width:13px;height:1px;background:#b8b8b8"></div><svg style="position:absolute;left:0;top:0" width="13" height="18.5"><path d="M3.5 6.425 h5 l-2.5 -3 z" fill="#111"/><path d="M3.5 12.075 h5 l-2.5 3 z" fill="#111"/></svg></div>
<div class="btn" style="left:673.5px;top:116px;width:119.5px;height:30.5px;line-height:28.5px;color:#a0a0a0">Custom Parameters</div>
<div class="grp" style="left:540px;top:158.5px;width:252px;height:136.0px;"></div>
<div class="tb" style="left:560px;top:168px;width:26px;height:19px;"></div>
<div class="t" style="left:605px;top:171.4px;">Right Longitude</div>
<div class="tb" style="left:683px;top:168px;width:98px;height:19px;"></div>
<div class="tb" style="left:560px;top:197.5px;width:26px;height:18.0px;"></div>
<div class="t" style="left:605px;top:197.7px;">Bottom Latitude</div>
<div class="tb" style="left:683px;top:197.5px;width:98px;height:18.0px;"></div>
<div class="t" style="right:191px;top:230px;">Select an area</div>
<div class="btn" style="left:648px;top:227px;width:133px;height:19.5px;line-height:17.5px;color:#a0a0a0">Load a kml/gpx file...</div>
<div class="t" style="right:165px;top:265.5px;">Coordinates values:</div>
<div class="btn" style="left:648px;top:263.5px;width:133px;height:19.5px;line-height:17.5px;">Paste from Clipboard</div>
<div class="tb" style="left:560px;top:308.5px;width:195px;height:18.0px;"></div>
<div class="btn" style="left:762px;top:307px;width:31px;height:19.5px;line-height:17.5px;">...</div>
<div style="position:absolute;left:560px;top:337px;width:117px;height:16px;background:#e2e2e2"></div>
<div style="position:absolute;left:560px;top:359px;width:117px;height:17px;background:#e2e2e2"></div>
<div class="btn" style="left:696.2px;top:341px;width:96.79999999999995px;height:34px;line-height:32px;font-weight:bold;font-size:12px">Start</div>
<div style="position:absolute;left:540px;top:386.8px;width:260px;height:1px;background:#fdfdfd"></div>
<div style="position:absolute;left:540px;top:387.8px;width:260px;height:1.2px;background:#b4b4b4"></div>
<div style="position:absolute;left:540px;top:389px;width:247.8px;height:146px;background:#fefee2"></div>
<div style="position:absolute;left:787.8px;top:389px;width:1.2px;height:146px;background:#fcfcfc"></div>
<svg style="position:absolute;left:792px;top:393.5px" width="8" height="6"><path d="M0.5 5.3 L3.9 0.4 L7.3 5.3 Z" fill="#858585"/></svg>
<svg style="position:absolute;left:792px;top:524.8px" width="8" height="6"><path d="M0.5 0.3 L3.9 5 L7.3 0.3 Z" fill="#858585"/></svg>

<!-- DIALOG -->
<div style="position:absolute;left:220.5px;top:3.5px;width:360px;height:560px;background:#f0f0f0;border:1px solid #a8a8a8;border-left-color:#f4f4f4;border-radius:7px 7px 0 0;box-shadow:0 10px 28px rgba(0,0,0,0.36), inset -1px 0 0 #fafafa"></div>
<div style="position:absolute;left:221.5px;top:4.5px;width:358px;height:20.5px;background:#eef2f8;border-radius:6px 6px 0 0">
</div>
<div class="t" style="left:224px;top:8.7px;color:#1a1a1a;font-size:10.4px;letter-spacing:-0.1px">Options</div>
<svg style="position:absolute;left:563.3px;top:9.6px" width="9" height="9" viewBox="0 0 9 9"><path d="M0.4 0.4 L8.6 8.6 M8.6 0.4 L0.4 8.6" stroke="#1a1a1a" stroke-width="1.05"/></svg>

<div class="grp" style="left:226.9px;top:33.5px;width:343.6px;height:50.5px;"></div>
<div class="t" style="left:234px;top:52.3px;">Default path to save :</div>
<div class="tb" style="left:346px;top:48px;width:185px;height:18.5px;"></div>
<div style="position:absolute;left:348.3px;top:49.8px;width:70.5px;height:15.7px;background:#0078d7"></div>
<div class="t" style="left:348.5px;top:50.6px;color:#fff">C:\offlinemaps</div>
<div class="btn" style="left:536px;top:45.5px;width:27px;height:20.5px;line-height:18.5px;">...</div>

<div class="grp" style="left:226.9px;top:94px;width:343.6px;height:138.7px;"></div>
<svg style="position:absolute;left:239.1px;top:108.8px" width="12" height="12" viewBox="0 0 12 12"><rect x="0" y="0" width="12" height="12" fill="#fbfbfb"/><rect x="1.5" y="1.5" width="9" height="9" fill="#fff"/><path d="M2 10.5 V2 H10.5" stroke="#707070" stroke-width="1.1" fill="none"/><path d="M2.9 9.8 V2.9 H9.8" stroke="#c0c0c0" stroke-width="0.6" fill="none"/></svg>
<div class="t" style="left:255.5px;top:108px;">Use proxy server</div>
<div class="t" style="left:240.7px;top:132.4px;">Proxy Server Name (IP)</div>
<div class="t" style="left:240.7px;top:157.1px;">Proxy Port</div>
<div class="t" style="left:240.7px;top:181.9px;">Proxy Username</div>
<div class="t" style="left:240.7px;top:207.5px;">Proxy Password</div>
<div class="tb" style="left:381px;top:132.2px;width:131px;height:19.0px;"></div>
<div class="tb" style="left:381px;top:156.4px;width:131px;height:18.69999999999999px;"></div>
<div class="tb" style="left:381px;top:180.3px;width:131px;height:18.599999999999994px;"></div>
<div class="tb" style="left:381px;top:207.5px;width:131px;height:19.0px;"></div>

<div class="grp" style="left:226.9px;top:249.6px;width:343.6px;height:151.4px;"></div>
<div class="t" style="left:232px;top:242.6px;background:#f0f0f0;padding:0 1.5px">Folder and tile name style</div>
<svg style="position:absolute;left:234px;top:265px" width="12" height="12" viewBox="0 0 12 12"><circle cx="6" cy="6" r="5.3" fill="#fafafa"/><circle cx="6" cy="6" r="4" fill="#fff"/><path d="M2.6 8.6 A4.1 4.1 0 0 1 8.9 3" stroke="#6a6a6a" stroke-width="1.1" fill="none"/><path d="M3.4 8 A3.2 3.2 0 0 1 8.2 3.6" stroke="#2a2a2a" stroke-width="0.5" fill="none"/></svg><div class="t" style="left:248.8px;top:264px;">All tiles saved in a single folder, tile named as Z_X_Y.ext</div>
<svg style="position:absolute;left:234px;top:293px" width="12" height="12" viewBox="0 0 12 12"><circle cx="6" cy="6" r="5.3" fill="#fafafa"/><circle cx="6" cy="6" r="4" fill="#fff"/><path d="M2.6 8.6 A4.1 4.1 0 0 1 8.9 3" stroke="#6a6a6a" stroke-width="1.1" fill="none"/><path d="M3.4 8 A3.2 3.2 0 0 1 8.2 3.6" stroke="#2a2a2a" stroke-width="0.5" fill="none"/></svg><div class="t" style="left:248.8px;top:292px;transform:scaleX(0.981);transform-origin:0 0">All tiles saved in a single folder, tile named as PREFIX_X_Y_Z.ext</div>
<svg style="position:absolute;left:234px;top:322px" width="12" height="12" viewBox="0 0 12 12"><circle cx="6" cy="6" r="5.3" fill="#fafafa"/><circle cx="6" cy="6" r="4" fill="#fff"/><path d="M2.6 8.6 A4.1 4.1 0 0 1 8.9 3" stroke="#6a6a6a" stroke-width="1.1" fill="none"/><path d="M3.4 8 A3.2 3.2 0 0 1 8.2 3.6" stroke="#2a2a2a" stroke-width="0.5" fill="none"/><circle cx="6" cy="6" r="1.8" fill="#111"/></svg><div class="t" style="left:248.8px;top:321.1px;">Tiles saved in cascade folders &quot;Z/X/&quot;, tile named as Y.ext</div>
<svg style="position:absolute;left:234px;top:350px" width="12" height="12" viewBox="0 0 12 12"><circle cx="6" cy="6" r="5.3" fill="#fafafa"/><circle cx="6" cy="6" r="4" fill="#fff"/><path d="M2.6 8.6 A4.1 4.1 0 0 1 8.9 3" stroke="#6a6a6a" stroke-width="1.1" fill="none"/><path d="M3.4 8 A3.2 3.2 0 0 1 8.2 3.6" stroke="#2a2a2a" stroke-width="0.5" fill="none"/></svg><div class="t" style="left:248.8px;top:349.1px;">Tiles saved in cascade folders &quot;Z/X/&quot;, tile named as Z_X_Y.ext</div>
<svg style="position:absolute;left:234px;top:378.1px" width="12" height="12" viewBox="0 0 12 12"><circle cx="6" cy="6" r="5.3" fill="#fafafa"/><circle cx="6" cy="6" r="4" fill="#fff"/><path d="M2.6 8.6 A4.1 4.1 0 0 1 8.9 3" stroke="#6a6a6a" stroke-width="1.1" fill="none"/><path d="M3.4 8 A3.2 3.2 0 0 1 8.2 3.6" stroke="#2a2a2a" stroke-width="0.5" fill="none"/></svg><div class="t" style="left:248.8px;top:377.2px;">Tiles saved in cascade folders &quot;Z/X/&quot;, tile named as X_Y_Z.ext</div>

<div class="grp" style="left:226.9px;top:418px;width:343.6px;height:82.60000000000002px;"></div>
<svg style="position:absolute;left:237.8px;top:431.9px" width="12" height="12" viewBox="0 0 12 12"><rect x="0" y="0" width="12" height="12" fill="#fbfbfb"/><rect x="1.5" y="1.5" width="9" height="9" fill="#fff"/><path d="M2 10.5 V2 H10.5" stroke="#707070" stroke-width="1.1" fill="none"/><path d="M2.9 9.8 V2.9 H9.8" stroke="#c0c0c0" stroke-width="0.6" fill="none"/><path d="M3 5.2 L4.8 7.6 L8.6 3.2" stroke="#111" stroke-width="1.7" fill="none" stroke-linejoin="miter"/></svg>
<div class="t" style="left:253.7px;top:431.1px;">Set pause to avoid IP banned</div>
<div class="t" style="left:254px;top:464.6px;">Run</div>
<div class="tb" style="left:278.75px;top:463px;width:20.0px;height:19px;"></div><div class="t" style="left:281.25px;top:465.8px">5</div><div style="position:absolute;left:298.75px;top:463px;width:13.449999999999989px;height:19px;background:#f0f0f0;border-right:1px solid #666;border-bottom:1px solid #666;box-shadow:inset -1px -1px 0 #b0b0b0, inset 1px 1px 0 #fff"><div style="position:absolute;left:0;top:8.5px;width:13.449999999999989px;height:1px;background:#666"></div><div style="position:absolute;left:0;top:9.5px;width:13.449999999999989px;height:1px;background:#b8b8b8"></div><svg style="position:absolute;left:0;top:0" width="13.449999999999989" height="19"><path d="M3.7249999999999943 6.55 h5 l-2.5 -3 z" fill="#111"/><path d="M3.7249999999999943 12.45 h5 l-2.5 3 z" fill="#111"/></svg></div>
<div class="t" style="left:323.75px;top:465.5px;">minutes, then pause</div>
<div class="tb" style="left:425.6px;top:465px;width:19.399999999999977px;height:18.75px;"></div><div class="t" style="left:428.1px;top:467.675px">1</div><div style="position:absolute;left:445px;top:465px;width:14px;height:18.75px;background:#f0f0f0;border-right:1px solid #666;border-bottom:1px solid #666;box-shadow:inset -1px -1px 0 #b0b0b0, inset 1px 1px 0 #fff"><div style="position:absolute;left:0;top:8.375px;width:14px;height:1px;background:#666"></div><div style="position:absolute;left:0;top:9.375px;width:14px;height:1px;background:#b8b8b8"></div><svg style="position:absolute;left:0;top:0" width="14" height="18.75"><path d="M4.0 6.4875 h5 l-2.5 -3 z" fill="#111"/><path d="M4.0 12.2625 h5 l-2.5 3 z" fill="#111"/></svg></div>
<div class="t" style="left:466.25px;top:467px;">minutes</div>
<div class="btn" style="left:366.25px;top:511px;width:60.94999999999999px;height:34px;line-height:32px;line-height:22px;border:1px solid #5a5a5a;box-shadow:inset 1px 1px 0 #fdfdfd, inset -1px -1px 0 #a0a0a0">OK</div>
<div class="btn" style="left:439.4px;top:511px;width:61.85000000000002px;height:34px;line-height:32px;line-height:22px">Cancel</div>
</body></html>
